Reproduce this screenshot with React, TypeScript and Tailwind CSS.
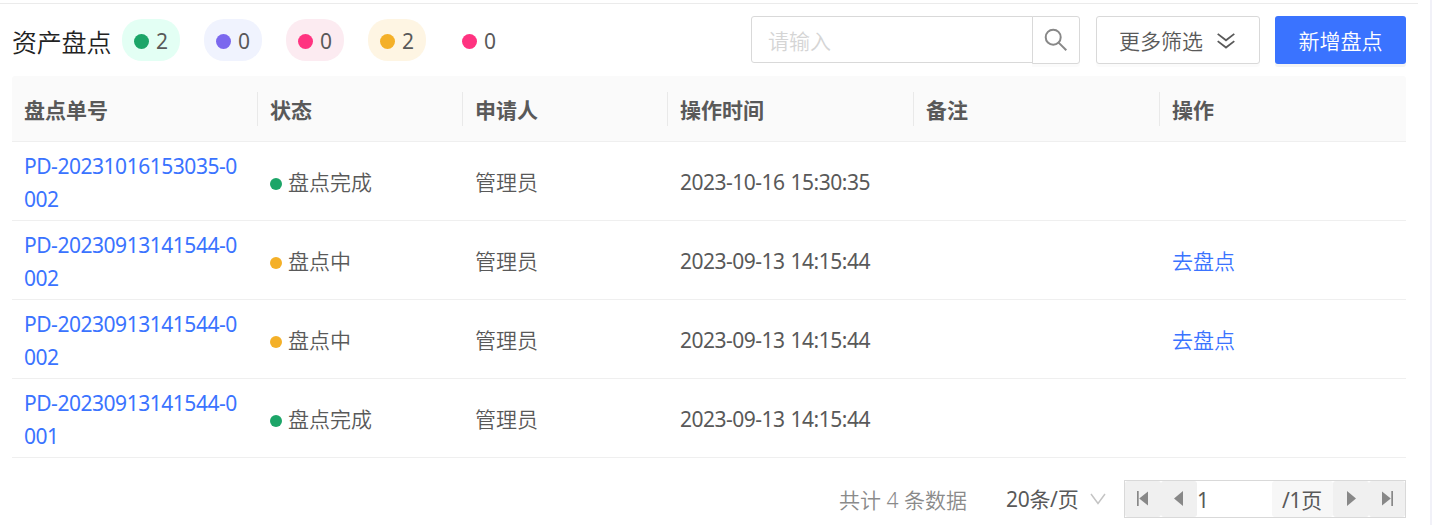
interface InventoryRow {
  code: string;
  done: boolean;
  applicant: string;
  time: string;
}

const counters = [
  { dot: 'bg-[#1ca568]', pill: 'bg-[#e3fff4]', count: 2 },
  { dot: 'bg-[#7b68ee]', pill: 'bg-[#f0f3fe]', count: 0 },
  { dot: 'bg-[#ff3380]', pill: 'bg-[#fcebf1]', count: 0 },
  { dot: 'bg-[#f4b028]', pill: 'bg-[#fef5e3]', count: 2 },
  { dot: 'bg-[#ff3380]', pill: 'bg-white', count: 0 },
];

const columns = ['盘点单号', '状态', '申请人', '操作时间', '备注', '操作'];

const rows: InventoryRow[] = [
  { code: 'PD-20231016153035-0002', done: true, applicant: '管理员', time: '2023-10-16 15:30:35' },
  { code: 'PD-20230913141544-0002', done: false, applicant: '管理员', time: '2023-09-13 14:15:44' },
  { code: 'PD-20230913141544-0002', done: false, applicant: '管理员', time: '2023-09-13 14:15:44' },
  { code: 'PD-20230913141544-0001', done: true, applicant: '管理员', time: '2023-09-13 14:15:44' },
];

const gridCols = 'grid grid-cols-[246px_205px_205px_246px_246px_246px]';

function Toolbar() {
  return (
    <div className="flex h-[72px] items-start pt-3">
      <h1 className="mt-[7px] w-[110px] text-[25px] leading-[38px] tracking-[-0.2px] whitespace-nowrap text-[#222]">
        资产盘点
      </h1>
      <div className="mt-[3px] flex gap-6">
        {counters.map(({ dot, pill, count }, index) => (
          <div
            key={index}
            className={`flex h-[42px] w-[58px] items-center gap-2 rounded-[20px] pl-3 ${pill}`}
          >
            <span className={`mt-[3px] h-[15px] w-[15px] rounded-full ${dot}`} />
            <span className="-ml-px pt-1 font-normal">{count}</span>
          </div>
        ))}
      </div>

      <div className="ml-auto flex items-start">
        <input
          type="text"
          placeholder="请输入"
          className="h-[47px] w-[282px] rounded-l-[3px] border border-[#d9d9d9] px-4 pt-0.5 outline-none placeholder:text-[#d5d5d5]"
        />
        <button
          type="button"
          className="-ml-px flex h-12 w-12 items-center justify-center rounded-r-[3px] border border-[#d9d9d9] bg-white shadow-[0_3px_0_rgba(0,0,0,0.015)]"
        >
          <svg viewBox="0 0 24 24" className="h-6 w-6" fill="none" stroke="#888" strokeWidth="2">
            <circle cx="9.2" cy="9.2" r="7.5" />
            <path d="M14.6 14.6L22.3 22.3" />
          </svg>
        </button>
        <button
          type="button"
          className="ml-4 flex h-12 w-[164px] items-center rounded-[3px] border border-[#d9d9d9] bg-white pl-[22px] whitespace-nowrap shadow-[0_3px_0_rgba(0,0,0,0.015)]"
        >
          <span className="pt-[3px]">更多筛选</span>
          <svg viewBox="0 0 18 16" className="mt-0.5 ml-[14px] h-4 w-[18px]" fill="none" stroke="#595959" strokeWidth="1.8">
            <path d="M0.7 0.9L9 7.3L17.3 0.9M0.7 8.1L9 14.5L17.3 8.1" />
          </svg>
        </button>
        <button
          type="button"
          className="ml-[15px] h-12 w-[131px] rounded-[3px] bg-[#3a73ff] pt-[3px] text-white shadow-[0_3px_0_rgba(0,0,0,0.045)]"
        >
          新增盘点
        </button>
      </div>
    </div>
  );
}

function InventoryTable() {
  return (
    <div>
      <div className={`${gridCols} h-[66px] items-center rounded-t-[3px] border-b border-[#efefef] bg-[#fafafa] font-bold`}>
        {columns.map((column, index) => (
          <div
            key={column}
            className={`flex h-[34px] items-center pt-1 pl-3 ${index < columns.length - 1 ? 'border-r border-[#e9e9e9]' : ''}`}
          >
            {column}
          </div>
        ))}
      </div>
      {rows.map((row, index) => (
        <div key={index} className={`${gridCols} h-[79px] items-center border-b border-[#efefef] pt-1`}>
          <a className="pr-3 pl-3 leading-[33px] font-normal tracking-[-0.47px] break-all text-[#3a73ff]">{row.code}</a>
          <div className="flex items-center gap-1.5 pl-3">
            <span className={`mt-0.5 h-3 w-3 rounded-full ${row.done ? 'bg-[#1ca568]' : 'bg-[#f4b028]'}`} />
            {row.done ? '盘点完成' : '盘点中'}
          </div>
          <div className="pl-3">{row.applicant}</div>
          <div className="pl-3 font-normal tracking-[-0.5px] [word-spacing:1px]">{row.time}</div>
          <div />
          <div className="pl-3 text-[#3a73ff]">{row.done ? '' : '去盘点'}</div>
        </div>
      ))}
    </div>
  );
}

function Pagination() {
  return (
    <div className="mt-[22px] flex h-[38px] items-center justify-end whitespace-nowrap">
      <span className="w-[129px] pt-1 text-[#8a8a8a]">共计 4 条数据</span>
      <div className="ml-[38px] flex w-[118px] items-center">
        <span className="w-[73px] pt-0.5 font-normal tracking-[-0.3px]">20条/页</span>
        <svg viewBox="0 0 16 12" className="ml-[11px] h-3 w-4" fill="none" stroke="#c4c4c4" strokeWidth="1.5">
          <path d="M1 1L8 10.5L15 1" />
        </svg>
      </div>
      <div className="flex h-[38px] w-[282px] border border-[#d9d9d9] bg-white">
        <button type="button" className="flex w-9 items-center rounded-[3px] bg-[#f0f0f0] pl-3">
          <svg viewBox="0 0 11 15" className="-mt-0.5 h-[15px] w-[11px]" fill="#888">
            <path d="M0 0H1.7V15H0zM11 0.5V14.5L2.2 7.5z" />
          </svg>
        </button>
        <button type="button" className="flex w-9 items-center rounded-[3px] bg-[#f0f0f0] pl-[13px]">
          <svg viewBox="0 0 9 15" className="-mt-0.5 h-[15px] w-[9px]" fill="#888">
            <path d="M9 0V15L0 7.5z" />
          </svg>
        </button>
        <span className="w-[75px] pt-0.5 leading-[34px] font-normal">1</span>
        <span className="w-[61px] rounded-[3px] bg-[#f7f7f7] pt-0.5 pl-2.5 leading-[34px] font-normal tracking-[-0.3px]">/1页</span>
        <button type="button" className="flex w-9 items-center rounded-[3px] bg-[#f0f0f0] pl-3.5">
          <svg viewBox="0 0 9 15" className="-mt-0.5 h-[15px] w-[9px]" fill="#888">
            <path d="M0 0V15L9 7.5z" />
          </svg>
        </button>
        <button type="button" className="flex w-9 items-center rounded-[3px] bg-[#f0f0f0] pl-[13px]">
          <svg viewBox="0 0 11 15" className="-mt-0.5 h-[15px] w-[11px]" fill="#888">
            <path d="M9.3 0H11V15H9.3zM0 0.5V14.5L8.8 7.5z" />
          </svg>
        </button>
      </div>
    </div>
  );
}

export default function App() {
  return (
    <div className="flex h-[525px] w-[1432px] overflow-hidden border-r-2 border-[#f1f1f8] bg-white pt-[3px] font-['Noto_Sans','Noto_Sans_CJK_SC',sans-serif] text-[21px] font-[350] text-[#595959]">
      <main className="w-[1418px] border-t border-[#ebebeb] pr-3 pl-3">
        <Toolbar />
        <InventoryTable />
        <Pagination />
      </main>
    </div>
  );
}
